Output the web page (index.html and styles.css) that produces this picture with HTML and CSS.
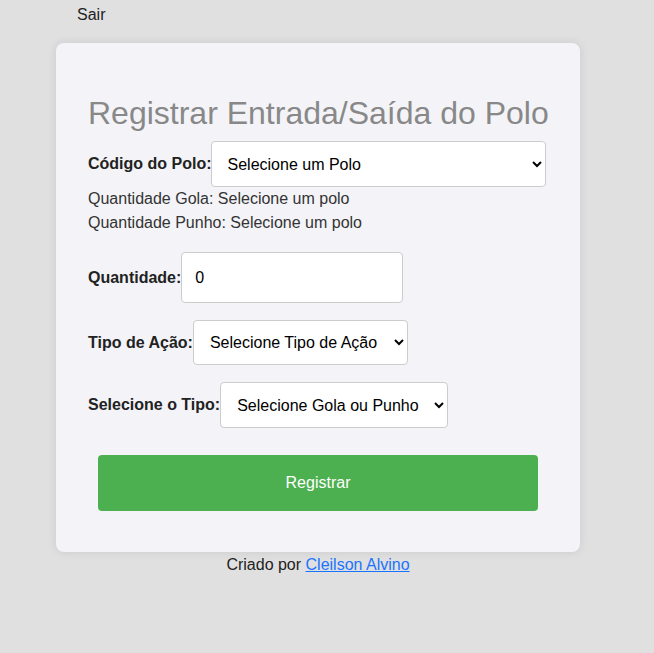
FILE: index.html
```html
<!DOCTYPE html>
<html lang="pt-BR">
<head>
  <meta charset="UTF-8" />
  <meta name="viewport" content="width=device-width, initial-scale=1.0"/>
  <title>Registrar Entrada/Saída do Polo</title>
  <link rel="stylesheet" href="styles.css">
</head>
<body>
  <div class="page">
    <nav class="topnav">
      <a href="#" class="logout">Sair</a>
    </nav>

    <div class="container">
      <h1>Registrar Entrada/Saída do Polo</h1>

      <form id="registroForm">
        <div class="field">
          <label for="codigoPolo">Código do Polo:</label><select id="codigoPolo" class="select-polo">
            <option>Selecione um Polo</option>
          </select>
        </div>

        <div class="info">
          <div id="qtdGola">Quantidade Gola: Selecione um polo</div>
          <div id="qtdPunho">Quantidade Punho: Selecione um polo</div>
        </div>

        <div class="field">
          <label for="quantidade">Quantidade:</label><input type="number" id="quantidade" value="0">
        </div>

        <div class="field">
          <label for="tipoAcao">Tipo de Ação:</label><select id="tipoAcao" class="select-acao">
            <option>Selecione Tipo de Ação</option>
            <option>Entrada</option>
            <option>Saída</option>
          </select>
        </div>

        <div class="field">
          <label for="tipo">Selecione o Tipo:</label><select id="tipo" class="select-tipo">
            <option>Selecione Gola ou Punho</option>
            <option>Gola</option>
            <option>Punho</option>
          </select>
        </div>

        <button type="submit">Registrar</button>
      </form>
    </div>

    <footer>Criado por <a href="#">Cleilson Alvino</a></footer>
  </div>
</body>
</html>
```

FILE: styles.css
```css
body {
  font-family: 'Liberation Sans', Arial, sans-serif;
  background-color: #e0e0e0;
  color: #333;
  margin: 0;
  padding: 0 8px;
}

.page {
  width: 620px;
}

.topnav {
  padding: 6px 0 0 69px;
  line-height: 18px;
}

.logout {
  color: #222;
  text-decoration: none;
  font-size: 16px;
}

.container {
  background-color: #f4f4f8;
  border-radius: 8px;
  width: 460px;
  margin: 19px auto 0;
  padding: 32px 32px 41px;
  box-shadow: 0 0 10px rgba(0, 0, 0, 0.1);
}

h1 {
  font-size: 32px;
  font-weight: normal;
  line-height: 37px;
  color: #888;
  white-space: nowrap;
  margin: 20px 0 9px;
}

.field {
  display: flex;
  align-items: center;
  margin-top: 17px;
}

h1 + form .field:first-child {
  margin-top: 0;
}

.field label {
  font-weight: bold;
  font-size: 16px;
  color: #222;
}

select, input {
  font-family: 'Liberation Sans', Arial, sans-serif;
  font-size: 16px;
  color: #000;
  background-color: #fff;
  border: 1px solid #ccc;
  border-radius: 4px;
  padding: 0 12px;
  box-sizing: border-box;
}

.select-polo {
  width: 335px;
  height: 46px;
  margin-left: -1px;
}

.select-acao {
  width: 215px;
  height: 45px;
}

.select-tipo {
  width: 228px;
  height: 46px;
}

#quantidade {
  width: 222px;
  height: 51px;
  padding: 0 13px;
}

.info {
  padding-bottom: 3px;
}

.info div {
  font-size: 16px;
  line-height: 18px;
  margin-top: 3px;
}

.info div + div {
  margin-top: 6px;
}

button {
  display: block;
  width: 440px;
  margin: 27px 10px 0;
  padding: 19px 0;
  line-height: 18px;
  font-family: 'Liberation Sans', Arial, sans-serif;
  font-size: 16px;
  background-color: #4caf50;
  color: white;
  border: none;
  border-radius: 4px;
  cursor: pointer;
}

button:hover {
  background-color: #45a049;
}

footer {
  text-align: center;
  margin-top: 4px;
  line-height: 18px;
  font-size: 16px;
  color: #222;
}

footer a {
  color: #1a73ff;
}
```
